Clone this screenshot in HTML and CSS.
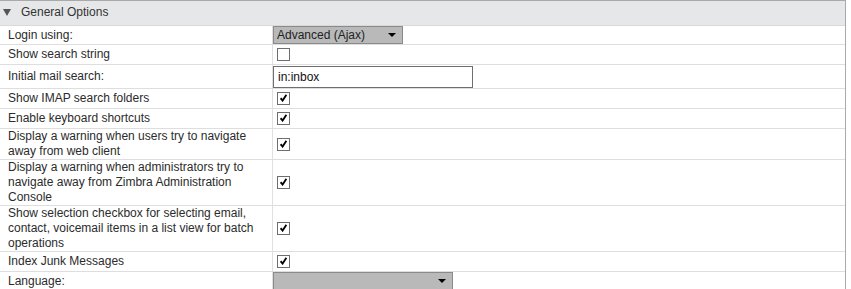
FILE: index.html
```html
<!DOCTYPE html>
<html>
<head>
<meta charset="utf-8">
<link rel="stylesheet" href="styles.css">
</head>
<body>
<div class="panel">
  <div class="panel-header"><span class="caret"></span><span class="title">General Options</span></div>
  <table class="options">
    <tr class="r1"><td class="lbl">Login using:</td><td class="val"><div class="select w130"><span>Advanced (Ajax)</span><span class="arrow"></span></div></td></tr>
    <tr><td class="lbl">Show search string</td><td class="val"><span class="cb"></span></td></tr>
    <tr class="r3"><td class="lbl">Initial mail search:</td><td class="val"><div class="input">in:inbox</div></td></tr>
    <tr><td class="lbl">Show IMAP search folders</td><td class="val"><span class="cb on"></span></td></tr>
    <tr><td class="lbl">Enable keyboard shortcuts</td><td class="val"><span class="cb on"></span></td></tr>
    <tr><td class="lbl">Display a warning when users try to navigate away from web client</td><td class="val"><span class="cb on"></span></td></tr>
    <tr><td class="lbl">Display a warning when administrators try to navigate away from Zimbra Administration Console</td><td class="val"><span class="cb on"></span></td></tr>
    <tr><td class="lbl">Show selection checkbox for selecting email, contact, voicemail items in a list view for batch operations</td><td class="val"><span class="cb on"></span></td></tr>
    <tr><td class="lbl">Index Junk Messages</td><td class="val"><span class="cb on"></span></td></tr>
    <tr class="r1"><td class="lbl">Language:</td><td class="val"><div class="select w180"><span></span><span class="arrow"></span></div></td></tr>
  </table>
</div>
</body>
</html>
```
FILE: styles.css
```css
html, body { margin: 0; padding: 0; background: #fff; }
body { font-family: Tahoma, "Liberation Sans", Arial, sans-serif; font-size: 12px; color: #2b2b2b; }
.panel { width: 845px; border-top: 1px solid #a9a9a9; border-right: 1px solid #a9a9a9; height: 288px; overflow: hidden; }
.panel-header { height: 24px; background: #e6e7e8; border-bottom: 1px solid #d9d9d9; display: flex; align-items: center; color: #333; }
.caret { width: 0; height: 0; border-left: 4px solid transparent; border-right: 4px solid transparent; border-top: 7px solid #555; margin: 0 10px 0 3px; position: relative; top: -1px; }
.title { font-size: 12px; position: relative; top: -1px; }
.options { border-collapse: collapse; table-layout: fixed; width: 845px; }
.options td { border-bottom: 1px solid #dedede; padding: 0 8px; line-height: 15px; vertical-align: middle; }
.options td.lbl { width: 256px; border-right: 1px solid #e0e0e0; }
.options td.val { width: auto; padding: 3px 0; }
.r1 td.val { padding: 0; }
.r3 td.val { padding: 1px 0 0 0; }
.cb { display: block; width: 11px; height: 11px; border: 1px solid #6e6e6e; background: #fff; margin-left: 4px; position: relative; }
.cb.on::after { content: ""; position: absolute; left: 2px; top: 1px; width: 7px; height: 8px;
  background: no-repeat center/contain url("data:image/svg+xml;utf8,<svg xmlns='http://www.w3.org/2000/svg' viewBox='0 0 7 8'><path d='M0.6 4.2 L2.6 6.6 L6.4 0.8' fill='none' stroke='black' stroke-width='1.8'/></svg>"); }
.select { height: 16px; border: 1px solid #8a8a8a; background: #b9b9b9; display: flex; align-items: center; justify-content: space-between; padding: 0 6px 0 3px; color: #222; font-size: 12px; line-height: 16px; }
.w130 { width: 119px; }
.w180 { width: 169px; }
.arrow { width: 0; height: 0; border-left: 4px solid transparent; border-right: 4px solid transparent; border-top: 4px solid #000; }
.input { width: 194px; height: 20px; border: 1px solid #6e6e6e; background: #fff; padding-left: 4px; line-height: 20px; color: #111; }
```
